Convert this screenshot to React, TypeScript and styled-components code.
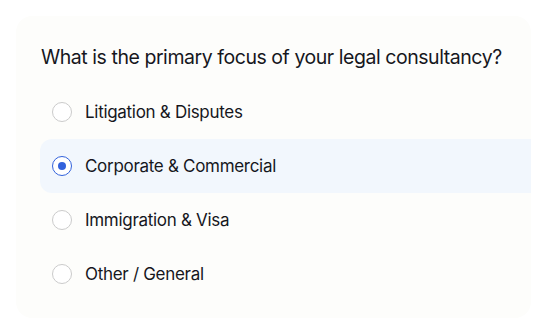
import React, { useState } from 'react'
import styled, { createGlobalStyle } from 'styled-components'

const GlobalStyle = createGlobalStyle`
  html, body {
    margin: 0;
    padding: 0;
    background: #ffffff;
  }
  body {
    font-family: Inter, "Noto Sans", sans-serif;
    color: #16171d;
  }
`

const Page = styled.div`
  width: 548px;
  height: 334px;
  padding: 16px 17px 16px 16px;
  box-sizing: border-box;
`

const Card = styled.div`
  height: 302px;
  background: #fdfdfb;
  border-radius: 16px;
  padding: 26px 0 0 24px;
  box-sizing: border-box;
`

const Question = styled.h2`
  margin: 0 0 13px 1px;
  font-size: 19.5px;
  font-weight: 400;
  line-height: 30px;
  letter-spacing: -0.45px;
  color: #16171d;
`

const Options = styled.div`
  display: flex;
  flex-direction: column;
`

const Option = styled.label<{ $selected: boolean }>`
  display: flex;
  align-items: center;
  gap: 13px;
  height: 54px;
  padding-left: 12px;
  border-radius: 12px 0 0 12px;
  background: ${(p) => (p.$selected ? '#f2f7fd' : 'transparent')};
  cursor: pointer;
`

const Radio = styled.span<{ $selected: boolean }>`
  width: 20px;
  height: 20px;
  box-sizing: border-box;
  border-radius: 50%;
  border: 1.5px solid ${(p) => (p.$selected ? '#3262dc' : '#cbcbcb')};
  background: #ffffff;
  display: flex;
  align-items: center;
  justify-content: center;

  &::after {
    content: '';
    width: 8px;
    height: 8px;
    border-radius: 50%;
    background: ${(p) => (p.$selected ? '#3262dc' : 'transparent')};
  }
`

const Label = styled.span`
  font-size: 17px;
  line-height: 22px;
  letter-spacing: -0.3px;
  color: #16171d;
`

const choices = [
  'Litigation & Disputes',
  'Corporate & Commercial',
  'Immigration & Visa',
  'Other / General',
]

export default function App() {
  const [selected, setSelected] = useState(1)
  return (
    <>
      <GlobalStyle />
      <Page>
        <Card>
          <Question>What is the primary focus of your legal consultancy?</Question>
          <Options>
            {choices.map((c, i) => (
              <Option key={c} $selected={i === selected} onClick={() => setSelected(i)}>
                <Radio $selected={i === selected} />
                <Label>{c}</Label>
              </Option>
            ))}
          </Options>
        </Card>
      </Page>
    </>
  )
}
